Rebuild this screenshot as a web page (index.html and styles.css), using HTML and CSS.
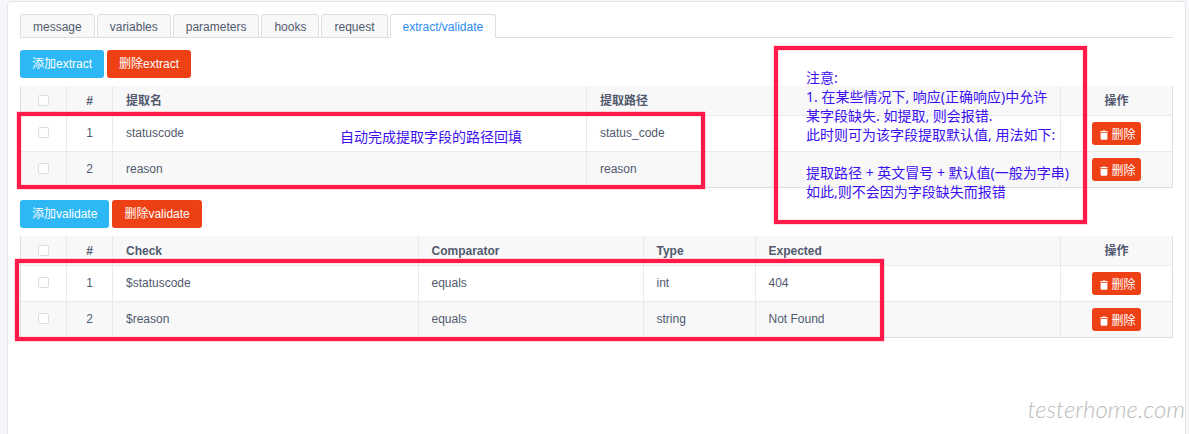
FILE: index.html
```html
<!DOCTYPE html>
<html lang="zh-CN">
<head>
    <meta charset="UTF-8">
    <meta name="viewport" content="width=device-width, initial-scale=1.0">
    <title>extract/validate</title>

    <link rel="stylesheet" href="styles.css">
</head>
<body>

<svg class="sprite" aria-hidden="true">
    <symbol id="trash" viewBox="0 0 8 10">
        <path d="M2.5 0.5h3v0.8H8v1H0v-1h2.5zM0.6 3h6.8v5.8a1 1 0 0 1-1 1H1.6a1 1 0 0 1-1-1z"/>
    </symbol>
</svg>

<main class="panel">
    <!-- tabs -->
    <nav class="tabs">
        <button type="button" class="tab">message</button>
        <button type="button" class="tab">variables</button>
        <button type="button" class="tab">parameters</button>
        <button type="button" class="tab">hooks</button>
        <button type="button" class="tab">request</button>
        <button type="button" class="tab active">extract/validate</button>
    </nav>

    <!-- extract -->
    <section class="block">
        <div class="actions">
            <button type="button" class="btn btn__info">添加extract</button>
            <button type="button" class="btn btn__error">删除extract</button>
        </div>
        <table class="grid">
            <colgroup>
                <col class="col__small"><col class="col__small"><col><col><col class="col__type">
            </colgroup>
            <thead>
                <tr>
                    <th class="center"><input type="checkbox" aria-label="全选"></th>
                    <th class="center">#</th>
                    <th>提取名</th>
                    <th>提取路径</th>
                    <th class="center">操作</th>
                </tr>
            </thead>
            <tbody>
                <tr>
                    <td class="center"><input type="checkbox" aria-label="statuscode"></td>
                    <td class="center">1</td>
                    <td>statuscode</td>
                    <td>status_code</td>
                    <td class="center"><button type="button" class="btn btn__error btn__small"><svg class="icon"><use href="#trash"/></svg>删除</button></td>
                </tr>
                <tr>
                    <td class="center"><input type="checkbox" aria-label="reason"></td>
                    <td class="center">2</td>
                    <td>reason</td>
                    <td>reason</td>
                    <td class="center"><button type="button" class="btn btn__error btn__small"><svg class="icon"><use href="#trash"/></svg>删除</button></td>
                </tr>
            </tbody>
        </table>
    </section>

    <!-- validate -->
    <section class="block">
        <div class="actions actions__wide">
            <button type="button" class="btn btn__info">添加validate</button>
            <button type="button" class="btn btn__error">删除validate</button>
        </div>
        <table class="grid">
            <colgroup>
                <col class="col__small"><col class="col__small"><col><col class="col__comparator"><col class="col__type"><col><col class="col__type">
            </colgroup>
            <thead>
                <tr>
                    <th class="center"><input type="checkbox" aria-label="全选"></th>
                    <th class="center">#</th>
                    <th>Check</th>
                    <th>Comparator</th>
                    <th>Type</th>
                    <th>Expected</th>
                    <th class="center">操作</th>
                </tr>
            </thead>
            <tbody>
                <tr>
                    <td class="center"><input type="checkbox" aria-label="$statuscode"></td>
                    <td class="center">1</td>
                    <td>$statuscode</td>
                    <td>equals</td>
                    <td>int</td>
                    <td>404</td>
                    <td class="center"><button type="button" class="btn btn__error btn__small"><svg class="icon"><use href="#trash"/></svg>删除</button></td>
                </tr>
                <tr>
                    <td class="center"><input type="checkbox" aria-label="$reason"></td>
                    <td class="center">2</td>
                    <td>$reason</td>
                    <td>equals</td>
                    <td>string</td>
                    <td>Not Found</td>
                    <td class="center"><button type="button" class="btn btn__error btn__small"><svg class="icon"><use href="#trash"/></svg>删除</button></td>
                </tr>
            </tbody>
        </table>
    </section>

    <!-- notes over the tables -->
    <div class="frame frame__extract"></div>
    <div class="frame frame__validate"></div>
    <p class="note note__path">自动完成提取字段的路径回填</p>
    <div class="frame frame__tips">
        <p class="note">注意:<br>1. 在某些情况下, 响应(正确响应)中允许<br>某字段缺失. 如提取, 则会报错.<br>此时则可为该字段提取默认值, 用法如下:<br><br>提取路径 + 英文冒号 + 默认值(一般为字串)<br>如此,则不会因为字段缺失而报错</p>
    </div>

    <span class="watermark">testerhome.com</span>
</main>

</body>
</html>
```

FILE: styles.css
```css
*, *::after, *::before {
    margin: 0;padding: 0;box-sizing: border-box;
}
body {
    min-height: 100vh;
    display: flex;
    padding: 1px 3px 0 7px;
    background: #f5f7f9;
    font: 12px/18px "Liberation Sans", "Noto Sans CJK SC", sans-serif;
    color: #515a6e;
}
button {font: inherit;color: inherit;cursor: pointer;}
.sprite {position: absolute;width: 0;height: 0;}
.panel {
    flex: 1;
    min-width: 0;
    position: relative;
    overflow: hidden;
    padding: 12px;
    background: #fff;
    border: 1px solid #e3e5e8;
    border-bottom: none;
    border-radius: 4px 4px 0 0;
}

/* tabs */
.tabs {
    display: flex;
    gap: 2px;
    height: 24px;
    border-bottom: 1px solid #dcdee2;
}
.tab {
    height: 24px;
    padding: 2px 12px 0;
    background: #f8f8f9;
    border: 1px solid #dcdee2;
    border-radius: 3px 3px 0 0;
}
.tab.active {
    background: #fff;
    color: #2d8cf0;
    border-bottom-color: #fff;
}

/* buttons */
.block {margin-top: 12px;}
.actions {display: flex;gap: 3px;margin-bottom: 8px;}
.btn {
    height: 28px;
    padding: 0 12px;
    border: none;
    border-radius: 3px;
    color: #fff;
}
.btn__info {background: #2db7f5;}
.btn__error {background: #ed4014;}
.btn__small {
    display: inline-flex;
    align-items: center;
    gap: 3px;
    height: 23px;
    padding: 2px 5px 0 8px;
    vertical-align: middle;
}
.icon {width: 8px;height: 10px;fill: #fff;}

/* tables */
.grid {
    width: 100%;
    table-layout: fixed;
    border-collapse: separate;
    border-spacing: 0;
    border-left: 1px solid #dcdee2;
}
.col__small {width: 46px;}
.col__type {width: 112px;}
.col__comparator {width: 225px;}
.grid th, .grid td {
    height: 36px;
    padding: 0 13px;
    text-align: left;
    vertical-align: middle;
    border-right: 1px solid #e8eaec;
    border-bottom: 1px solid #e8eaec;
}
.grid th {height: 30px;background: #f8f8f9;}
.grid td {padding-bottom: 2px;}
.grid tbody tr:nth-child(even) {background: #f8f8f9;}
.grid tr > :last-child {padding-bottom: 0;border-right-color: #dcdee2;}
.grid tbody tr:last-child td {border-bottom-color: #dcdee2;}
.grid .center {padding-left: 0;padding-right: 0;text-align: center;}
.grid input {
    appearance: none;
    display: block;
    width: 11px;
    height: 11px;
    margin: 0 auto;
    background: #fff;
    border: 1px solid #dcdee2;
    border-radius: 2px;
}
.grid input:checked {background: #2d8cf0;border-color: #2d8cf0;}

/* notes */
.frame {
    position: absolute;
    border: 4px solid #ff1a48;
    box-shadow: 0 0 1px #ff1a48, inset 0 0 1px #ff1a48;
    pointer-events: none;
}
.frame__extract {left: 9px;top: 110px;width: 688px;height: 77px;}
.frame__validate {left: 7px;top: 257px;width: 869px;height: 82px;}
.frame__tips {left: 766px;top: 44px;width: 313px;height: 178px;padding: 18px 0 0 28px;}
.note {
    font: 14px/19px "Noto Sans", "Noto Sans CJK SC", sans-serif;
    color: #3c0ff0;
    white-space: nowrap;
}
.note__path {position: absolute;left: 332px;top: 125px;}
.watermark {
    position: absolute;
    right: 0;
    top: 393px;
    font: italic 300 24px/28px Lato, sans-serif;
    color: #bbb;
}
```
